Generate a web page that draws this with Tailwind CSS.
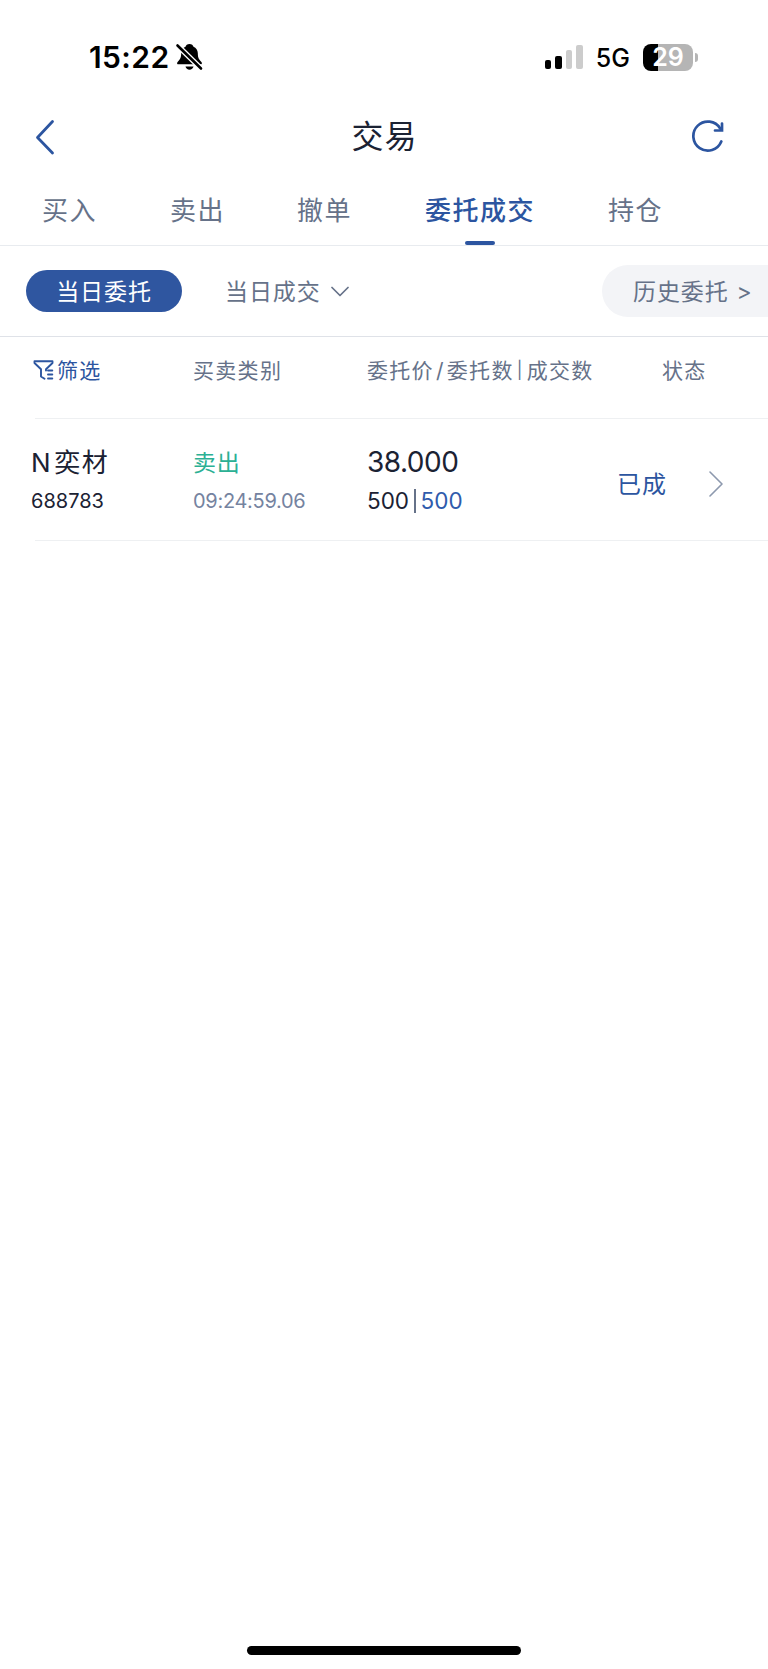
<!DOCTYPE html>
<html lang="zh-CN">

<head>
    <meta charset="UTF-8">
    <meta name="viewport" content="width=device-width, initial-scale=1.0">
    <title>交易</title>
    <script src="https://cdn.jsdelivr.net/npm/@tailwindcss/browser@4"></script>
</head>

<body class="bg-white min-h-screen flex flex-col overflow-x-hidden font-['Inter','Noto_Sans_CJK_SC',sans-serif] text-[#1b2233] whitespace-nowrap leading-none">
    <!-- Status bar -->
    <div class="h-[100px] pt-[14px] pl-[89px] pr-[70px] flex items-center justify-between text-black">
        <div class="flex items-center">
            <span class="w-[86px] text-[30px] tracking-[0.400px] font-semibold">15:22</span>
            <svg class="w-[28px] h-[28px]" viewBox="0 0 28 28">
                <path d="M14.500 1c-2.200 0-3.600 1.200-4 2.700C7.800 4.800 6.300 7 6.200 10c-.1 4.500-.7 6-3.400 8.700-1.300 1.400-.8 2.600.7 2.600h22c1.500 0 2-1.200.7-2.600-2.700-2.700-3.300-4.200-3.400-8.700-.1-3-1.600-5.200-4.300-6.300-.4-1.500-1.800-2.700-4-2.700Z" />
                <path d="M10.500 23.500h8c-.4 2-2 3.200-4 3.200s-3.600-1.200-4-3.200Z" />
                <path d="M1 1 27.500 27" stroke="white" stroke-width="5.400" />
                <path d="M2.500 2.500 26 25.500" stroke="black" stroke-width="2.600" stroke-linecap="round" />
            </svg>
        </div>
        <div class="flex items-center">
            <div class="flex items-end gap-[4px] w-[38px] h-[24px] mr-[13px]">
                <div class="w-[6.500px] h-[9px] rounded-[2px] bg-black"></div>
                <div class="w-[6.500px] h-[13px] rounded-[2px] bg-black"></div>
                <div class="w-[6.500px] h-[19px] rounded-[2px] bg-[#cccccc]"></div>
                <div class="w-[6.500px] h-[24px] rounded-[2px] bg-[#cccccc]"></div>
            </div>
            <span class="mt-[2px] text-[25px] font-medium mr-[13px]">5G</span>
            <div class="w-[50px] h-[27px] rounded-[8px] bg-linear-to-r from-black from-30% to-[#b5b5b5] to-30% flex items-center justify-center text-white text-[25px] font-semibold">29</div>
            <div class="w-[3px] h-[9px] ml-[2px] rounded-r-full bg-[#b5b5b5]"></div>
        </div>
    </div>

    <!-- Title bar -->
    <header class="h-[73px] pl-[35px] pr-[43px] flex items-center justify-between">
        <svg class="w-[20px] h-[36px]" viewBox="0 0 20 36" fill="none" stroke="#2c55a0" stroke-width="2.800" stroke-linecap="round" stroke-linejoin="round">
            <path d="M17.500 2.500 2.500 18.500l15 15.500" />
        </svg>
        <h1 class="text-[32px] tracking-[1px] pl-[23px]">交易</h1>
        <svg class="w-[34px] h-[34px] -mt-[2px]" viewBox="0 0 34 34" fill="none" stroke="#2c55a0" stroke-width="2.700" stroke-linecap="round">
            <path d="M30.300 22.500A14.500 14.500 0 1 1 29.200 9.500" />
            <path d="M31 4.500v7H24" />
        </svg>
    </header>

    <!-- Tabs -->
    <nav class="h-[73px] pl-[42px] flex items-center border-b border-[#e8ebef] text-[26px] tracking-[1.500px] text-[#667289]">
        <div class="w-[128px] pt-[4px]">买入</div>
        <div class="w-[127px] pt-[4px]">卖出</div>
        <div class="w-[128px] pt-[4px]">撤单</div>
        <div class="w-[183px] pt-[4px] h-full relative flex items-center text-[#2c55a0] font-medium">
            委托成交
            <div class="absolute left-[39.500px] bottom-0 w-[30px] h-[4px] rounded-full bg-[#2c55a0]"></div>
        </div>
        <div class="pt-[4px]">持仓</div>
    </nav>

    <!-- Order scope -->
    <div class="h-[91px] pl-[26px] flex items-center border-b border-[#dfe2e8] text-[23px] tracking-[0.900px] text-[#667289]">
        <div class="w-[156px] h-[42px] pt-[2px] rounded-full bg-[#2f56a0] text-white flex items-center justify-center">当日委托</div>
        <div class="flex items-center pt-[2px] ml-[43px]">
            当日成交
            <svg class="w-[18px] h-[11px] -mt-[2px] ml-[10px]" viewBox="0 0 18 11" fill="none" stroke="#667289" stroke-width="1.700" stroke-linecap="round" stroke-linejoin="round">
                <path d="M1 1.500 9 9.500l8-8" />
            </svg>
        </div>
        <div class="w-[166px] h-[52px] pt-[2px] pl-[31px] ml-auto rounded-l-full rounded-tr-[16px] rounded-br-[16px] bg-[#f3f4f7] flex items-center">历史委托<span class="ml-[8px]">&gt;</span></div>
    </div>

    <!-- Column heads -->
    <div class="h-[81px] pb-[15px] pl-[33px] flex items-center text-[21px] tracking-[1.300px] text-[#667289]">
        <div class="w-[160px] flex items-center text-[#2c55a0]">
            <svg class="w-[21px] h-[20px] mr-[3px]" viewBox="0 0 21 20" fill="none" stroke="#2c55a0" stroke-width="1.900" stroke-linecap="round" stroke-linejoin="round">
                <path d="M13 10.500V9.200L19.500 3V1.200H1.500V3L8 9.200v7.300l3.500 2.300" />
                <path d="M15 10.500h4.300M15 14.500h4.300M15 18.500h4.300" />
            </svg>
            筛选
        </div>
        <div class="w-[174px]">买卖类别</div>
        <div class="w-[295px] flex items-center">委托价<span class="mx-[2px]">/</span>委托数<span class="ml-[3px] mr-[3px] text-[17px]">|</span>成交数</div>
        <div>状态</div>
    </div>

    <!-- Orders -->
    <div class="ml-[35px] h-[123px] pt-[4px] border-y border-[#eef0f2] flex items-center">
        <div class="-ml-[4px] w-[162px] flex flex-col gap-[15px]">
            <div class="h-[26px] text-[26px] tracking-[1.600px]">N<span class="ml-[2px]">奕材</span></div>
            <div class="h-[22px] text-[20px]">688783</div>
        </div>
        <div class="w-[174px] flex flex-col gap-[15px]">
            <div class="h-[26px] text-[23px] tracking-[0.800px] text-[#2bb094] flex items-center">卖出</div>
            <div class="h-[22px] text-[20px] tracking-[-0.300px] text-[#7583a0]">09:24:59.06</div>
        </div>
        <div class="w-[250px] flex flex-col gap-[15px]">
            <div class="h-[26px] text-[28px] tracking-[-0.500px] -mt-[2px] mb-[2px]">38.000</div>
            <div class="h-[22px] -mt-[1px] mb-[1px] text-[22.500px] flex items-center">500<div class="w-[1.500px] h-[24px] mx-[5px] bg-[#667289]"></div><span class="text-[#2f5bac]">500</span></div>
        </div>
        <div class="pt-[6px] text-[24px] tracking-[1px] text-[#2c55a0]">已成</div>
        <svg class="w-[14px] h-[26px] mt-[4px] ml-[42px]" viewBox="0 0 14 26" fill="none" stroke="#8d99ae" stroke-width="1.600" stroke-linecap="round" stroke-linejoin="round">
            <path d="M1 1 13 13 1 25" />
        </svg>
    </div>

    <!-- Home indicator -->
    <div class="mt-auto mb-[14px] mx-auto w-[274px] h-[9px] rounded-full bg-black"></div>
</body>

</html>
